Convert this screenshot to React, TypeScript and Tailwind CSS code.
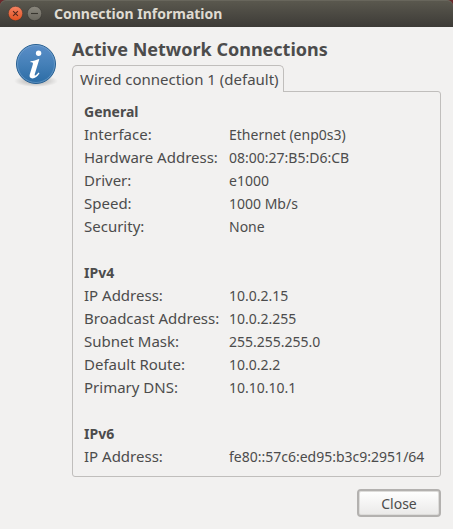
type Section = { title: string; rows: [string, string][] };

const sections: Section[] = [
  {
    title: "General",
    rows: [
      ["Interface:", "Ethernet (enp0s3)"],
      ["Hardware Address:", "08:00:27:B5:D6:CB"],
      ["Driver:", "e1000"],
      ["Speed:", "1000 Mb/s"],
      ["Security:", "None"],
    ],
  },
  {
    title: "IPv4",
    rows: [
      ["IP Address:", "10.0.2.15"],
      ["Broadcast Address:", "10.0.2.255"],
      ["Subnet Mask:", "255.255.255.0"],
      ["Default Route:", "10.0.2.2"],
      ["Primary DNS:", "10.10.10.1"],
    ],
  },
  {
    title: "IPv6",
    rows: [["IP Address:", "fe80::57c6:ed95:b3c9:2951/64"]],
  },
];

function TitleBar() {
  return (
    <header className="flex h-[27px] items-center rounded-t-md bg-linear-to-b from-[#5b594f] to-[#3d3b37] pl-2 shadow-[inset_0_1px_0_#68665c]">
      <button type="button" aria-label="Close window" className="size-[15px] rounded-full">
        <svg viewBox="0 0 15 15" className="size-[15px]">
          <defs>
            <linearGradient id="closeFill" x1="0" y1="0" x2="0" y2="1">
              <stop offset="0" stopColor="#f58464" />
              <stop offset="1" stopColor="#e0501f" />
            </linearGradient>
          </defs>
          <circle cx="7.5" cy="7.5" r="7.2" fill="url(#closeFill)" stroke="#38332c" strokeWidth="0.5" />
          <path d="M5.1 5.1l4.8 4.8M9.9 5.1l-4.8 4.8" stroke="#53281b" strokeWidth="1.1" />
        </svg>
      </button>
      <button type="button" aria-label="Minimize window" className="ml-1 size-[15px] rounded-full">
        <svg viewBox="0 0 15 15" className="size-[15px]">
          <defs>
            <linearGradient id="minFill" x1="0" y1="0" x2="0" y2="1">
              <stop offset="0" stopColor="#8b887e" />
              <stop offset="1" stopColor="#68665d" />
            </linearGradient>
          </defs>
          <circle cx="7.5" cy="7.5" r="7.2" fill="url(#minFill)" stroke="#33312c" strokeWidth="0.5" />
          <path d="M4 7.5h7" stroke="#38362f" strokeWidth="1.1" />
        </svg>
      </button>
      <div className="ml-3 text-sm leading-5 font-bold text-[#dfdbd2]">Connection Information</div>
    </header>
  );
}

function InfoIcon() {
  return (
    <svg viewBox="0 0 46 46" className="size-[46px] shrink-0" aria-hidden="true">
      <defs>
        <linearGradient id="infoFill" x1="0" y1="0" x2="0" y2="1">
          <stop offset="0" stopColor="#5b8ec8" />
          <stop offset="0.5" stopColor="#4580b8" />
          <stop offset="1" stopColor="#2b6ca5" />
        </linearGradient>
        <radialGradient id="infoShadow">
          <stop offset="0.5" stopColor="#000" stopOpacity="0.16" />
          <stop offset="1" stopColor="#000" stopOpacity="0" />
        </radialGradient>
      </defs>
      <ellipse cx="23" cy="38" rx="22" ry="6" fill="url(#infoShadow)" />
      <circle cx="23" cy="21" r="19.5" fill="url(#infoFill)" stroke="#286092" />
      <circle cx="23" cy="21" r="18.5" fill="none" stroke="#86afd6" strokeOpacity="0.5" />
      <circle cx="25.6" cy="10.3" r="2.7" fill="#fff" />
      <path
        d="M17.500 18.200c3-.2 5.700-1.200 8.200-2.300l.6.4-4.500 14.800c-.4 1.400.1 1.800 1 1.200 1-.6 1.800-1.500 2.700-2.700l1 .7c-2 3.300-4.400 5.100-7 5.100-2.400 0-3.500-1.500-2.700-4.100l3-9.800c.5-1.700.1-2.200-2.300-2.200z"
        fill="#fff"
      />
    </svg>
  );
}

function DetailTable({ title, rows }: Section) {
  return (
    <table className="w-full table-fixed border-collapse text-left">
      <colgroup>
        <col className="w-[145px]" />
        <col />
      </colgroup>
      <thead>
        <tr>
          <th colSpan={2} className="h-[23px] p-0 font-bold">{title}</th>
        </tr>
      </thead>
      <tbody>
        {rows.map(([label, value]) => (
          <tr key={label}>
            <th scope="row" className="h-[23px] p-0 text-[15px] leading-[23px] font-normal whitespace-nowrap">{label}</th>
            <td className="h-[23px] p-0 whitespace-nowrap">{value}</td>
          </tr>
        ))}
      </tbody>
    </table>
  );
}

export default function App() {
  return (
    <div className="bg-[#6b2a2c] font-['Noto_Sans','Open_Sans',sans-serif] text-sm leading-[23px] text-[#4c4c4c]">
      <TitleBar />
      <main className="flex min-h-[calc(100vh-27px)] flex-col bg-[#f2f1f0] pr-3 pb-3 pl-[13px]">
        <div className="flex gap-[13px]">
          <div className="pt-4">
            <InfoIcon />
          </div>
          <div className="min-w-0 grow pt-2.5">
            <h1 className="text-lg leading-6 font-bold">Active Network Connections</h1>
            <div role="tablist" className="mt-1 flex">
              <button
                type="button"
                role="tab"
                id="wired-tab"
                aria-selected="true"
                aria-controls="wired-panel"
                className="relative z-10 -mb-px h-[27px] rounded-t-[5px] border border-b-0 border-[#c0bebc] bg-[#f2f1f0] pr-1 pl-[7px] text-[15px] leading-[23px] whitespace-nowrap"
              >
                Wired connection 1 (default)
              </button>
            </div>
            <section
              role="tabpanel"
              id="wired-panel"
              aria-labelledby="wired-tab"
              className="flex flex-col gap-[23px] rounded-[3px] rounded-tl-none border border-[#c0bebc] py-2 pr-2 pl-[11px]"
            >
              {sections.map((section) => (
                <DetailTable key={section.title} {...section} />
              ))}
            </section>
          </div>
        </div>
        <div className="mt-3 flex justify-end">
          <button
            type="button"
            className="flex h-7 w-[84px] items-center justify-center rounded-[4px] border-2 border-[#b3b1af] bg-linear-to-b from-white to-[#eae9e8] shadow-[inset_0_0_0_1px_#dddcda]"
          >
            Close
          </button>
        </div>
      </main>
    </div>
  );
}
